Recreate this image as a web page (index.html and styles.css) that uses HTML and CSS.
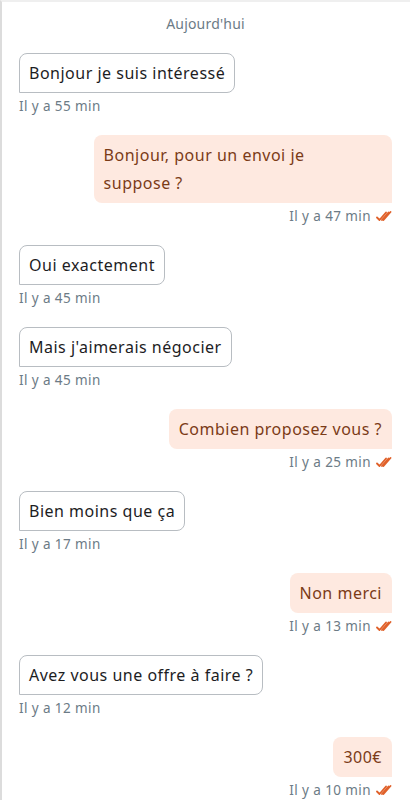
FILE: index.html
```html
<!DOCTYPE html>
<html>
<head>
	<meta charset="utf-8">
	<title>Conversation</title>
	<link rel="stylesheet" href="styles.css">
</head>
<body>
	<!-- fil de discussion -->
	<div class="thread">
		<div class="day">Aujourd'hui</div>

		<div class="msg in">
			<div class="bubble">Bonjour je suis intéressé</div>
			<div class="time">Il y a 55 min</div>
		</div>

		<div class="msg out">
			<div class="bubble">Bonjour, pour un envoi je suppose&nbsp;?</div>
			<div class="time">Il y a 47 min <svg class="seen" viewBox="0 0 16 12"><path d="M1 7.5 L3.5 10 L10 2.5 M6 10 L12.5 2.5 M7.5 10 L14.5 2"/></svg></div>
		</div>

		<div class="msg in">
			<div class="bubble">Oui exactement</div>
			<div class="time">Il y a 45 min</div>
		</div>

		<div class="msg in">
			<div class="bubble">Mais j'aimerais négocier</div>
			<div class="time">Il y a 45 min</div>
		</div>

		<div class="msg out">
			<div class="bubble">Combien proposez vous&nbsp;?</div>
			<div class="time">Il y a 25 min <svg class="seen" viewBox="0 0 16 12"><path d="M1 7.5 L3.5 10 L10 2.5 M6 10 L12.5 2.5 M7.5 10 L14.5 2"/></svg></div>
		</div>

		<div class="msg in">
			<div class="bubble">Bien moins que ça</div>
			<div class="time">Il y a 17 min</div>
		</div>

		<div class="msg out">
			<div class="bubble">Non merci</div>
			<div class="time">Il y a 13 min <svg class="seen" viewBox="0 0 16 12"><path d="M1 7.5 L3.5 10 L10 2.5 M6 10 L12.5 2.5 M7.5 10 L14.5 2"/></svg></div>
		</div>

		<div class="msg in">
			<div class="bubble">Avez vous une offre à faire&nbsp;?</div>
			<div class="time">Il y a 12 min</div>
		</div>

		<div class="msg out">
			<div class="bubble">300€</div>
			<div class="time">Il y a 10 min <svg class="seen" viewBox="0 0 16 12"><path d="M1 7.5 L3.5 10 L10 2.5 M6 10 L12.5 2.5 M7.5 10 L14.5 2"/></svg></div>
		</div>
	</div>
</body>
</html>
```

FILE: styles.css
```css
body{
	margin: 0;
	background: #ffffff;
	font-family: "Noto Sans", Lato, sans-serif;
}

/* conteneur du fil */
.thread{
	min-height: 800px;
	box-sizing: border-box;
	border-left: 2px solid #dcdcdc;
	border-top: 2px solid #efefef;
	padding: 12px 18px 0 17px;
	display: flex;
	flex-direction: column;
	gap: 20px;
}

.day{
	text-align: center;
	font-size: 14px;
	line-height: 20px;
	letter-spacing: 0.2px;
	color: #6c7b86;
	margin-bottom: -1px;
}

.msg{
	display: flex;
	flex-direction: column;
	gap: 4px;
}

.msg.in{ align-items: flex-start; }
.msg.out{ align-items: flex-end; }

.bubble{
	max-width: 80%;
	box-sizing: border-box;
	font-size: 16px;
	line-height: 28px;
	letter-spacing: 0.5px;
	border-radius: 8px;
}

.in .bubble{
	border: 1px solid #b8bdc2;
	border-bottom-left-radius: 0;
	padding: 5px 9px;
	color: #1d1d1f;
}

.out .bubble{
	background: #fee9e0;
	border-bottom-right-radius: 0;
	padding: 6px 10px;
	color: #7b3b17;
}

.time{
	font-size: 13.5px;
	line-height: 18px;
	letter-spacing: 0.4px;
	color: #6c7b86;
	display: flex;
	align-items: center;
	gap: 5px;
}

.seen{
	width: 16px;
	height: 12px;
	fill: none;
	stroke: #e0612a;
	stroke-width: 1.8;
	stroke-linecap: round;
	stroke-linejoin: round;
}
```
